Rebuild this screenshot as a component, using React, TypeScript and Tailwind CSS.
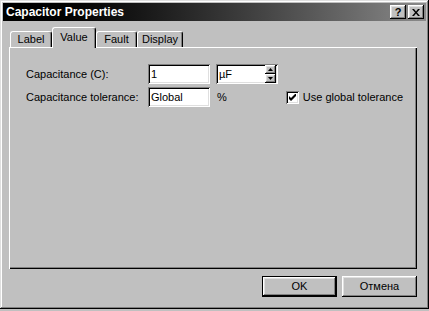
import React from 'react';

const raised =
  'shadow-[inset_-1px_-1px_#000,inset_1px_1px_#fff,inset_-2px_-2px_#808080,inset_2px_2px_#dfdfdf]';
const sunken =
  'shadow-[inset_1px_1px_#808080,inset_-1px_-1px_#fff,inset_2px_2px_#000,inset_-2px_-2px_#dfdfdf]';

function Tab({ label, active, w }: { label: string; active?: boolean; w: string }) {
  return (
    <div
      className={`${w} flex items-start justify-center rounded-t-[3px] border-l border-t border-r border-l-white border-t-white border-r-black bg-[#c0c0c0] shadow-[inset_-1px_0_#808080] ${
        active ? 'relative z-10 -mb-[1px] h-[21px] pt-[2px]' : 'h-[16px] pt-[0px]'
      }`}
    >
      <span className="text-[11px] leading-[14px] text-black">{label}</span>
    </div>
  );
}

function Field({ value, w }: { value: string; w: string }) {
  return (
    <div className={`${w} h-[20px] bg-white ${sunken} flex items-center pl-[3px] text-[11px] text-black`}>
      {value}
    </div>
  );
}

function Arrow({ up }: { up?: boolean }) {
  return (
    <div className={`h-[9px] w-[11px] bg-[#c0c0c0] ${raised} flex items-center justify-center`}>
      <svg width="5" height="3" viewBox="0 0 5 3">
        {up ? <path d="M2.5 0 L5 3 L0 3 Z" fill="#000" /> : <path d="M0 0 L5 0 L2.5 3 Z" fill="#000" />}
      </svg>
    </div>
  );
}

export default function App() {
  return (
    <div className="w-[429px] h-[311px] bg-[#c0c0c0] font-['Liberation_Sans',Arial,sans-serif] overflow-hidden">
      <div
        className={`flex h-[309px] w-[429px] flex-col bg-[#c0c0c0] p-[3px] shadow-[inset_-1px_-1px_#000,inset_1px_1px_#dfdfdf,inset_-2px_-2px_#808080,inset_2px_2px_#fff]`}
      >
        {/* Title bar */}
        <div className="flex h-[18px] items-center justify-between bg-gradient-to-r from-[#000] to-[#8a8a8a] pl-[3px] pr-[2px]">
          <span className="text-[12px] font-bold leading-none text-white">Capacitor Properties</span>
          <div className="flex gap-[2px]">
            <div className={`flex h-[14px] w-[16px] items-center justify-center bg-[#c0c0c0] ${raised}`}>
              <span className="text-[11px] font-bold leading-none text-black">?</span>
            </div>
            <div className={`flex h-[14px] w-[16px] items-center justify-center bg-[#c0c0c0] ${raised}`}>
              <svg width="8" height="7" viewBox="0 0 8 7">
                <path d="M0 0h2l2 2.5L6 0h2L5 3.5 8 7H6L4 4.5 2 7H0l3-3.5z" fill="#000" />
              </svg>
            </div>
          </div>
        </div>

        {/* Tabs */}
        <div className="ml-[6px] mr-[9px] mt-[6px] flex items-end pl-[1px]">
          <Tab label="Label" w="w-[42px]" />
          <Tab label="Value" w="w-[44px]" active />
          <Tab label="Fault" w="w-[41px]" />
          <Tab label="Display" w="w-[46px]" />
        </div>

        {/* Panel */}
        <div className="ml-[6px] mr-[9px] h-[222px] shadow-[inset_1px_1px_#fff,inset_-1px_-1px_#000,inset_-2px_-2px_#808080] pl-[17px] pt-[17px] text-[11px] text-black">
          <div className="flex h-[20px] items-center">
            <span className="w-[122px]">Capacitance (C):</span>
            <Field value="1" w="w-[62px]" />
            <div className="ml-[6px] flex h-[20px]">
              <div className={`flex h-[20px] w-[62px] items-center bg-white pl-[3px] ${sunken}`}>
                <span className="flex-1">µF</span>
                <div className="mr-[2px] flex flex-col">
                  <Arrow up />
                  <Arrow />
                </div>
              </div>
            </div>
          </div>
          <div className="mt-[3px] flex h-[20px] items-center">
            <span className="w-[122px]">Capacitance tolerance:</span>
            <Field value="Global" w="w-[62px]" />
            <span className="ml-[7px]">%</span>
            <div className="ml-[59px] flex items-center">
              <div className={`flex h-[13px] w-[13px] items-center justify-center bg-white ${sunken}`}>
                <svg width="7" height="7" viewBox="0 0 7 7">
                  <path d="M0 2v3l2 2 5-5V-1L2 4z" fill="#000" />
                </svg>
              </div>
              <span className="ml-[4px]">Use global tolerance</span>
            </div>
          </div>
        </div>

        {/* Buttons */}
        <div className="mr-[9px] mt-[7px] flex justify-end gap-[5px]">
          <div className="flex h-[21px] w-[75px] border border-black bg-[#c0c0c0]">
            <div className={`flex flex-1 items-center justify-center ${raised} text-[11px] text-black`}>OK</div>
          </div>
          <div className={`flex h-[21px] w-[75px] items-center justify-center bg-[#c0c0c0] ${raised} text-[11px] text-black`}>
            Отмена
          </div>
        </div>
      </div>
    </div>
  );
}
